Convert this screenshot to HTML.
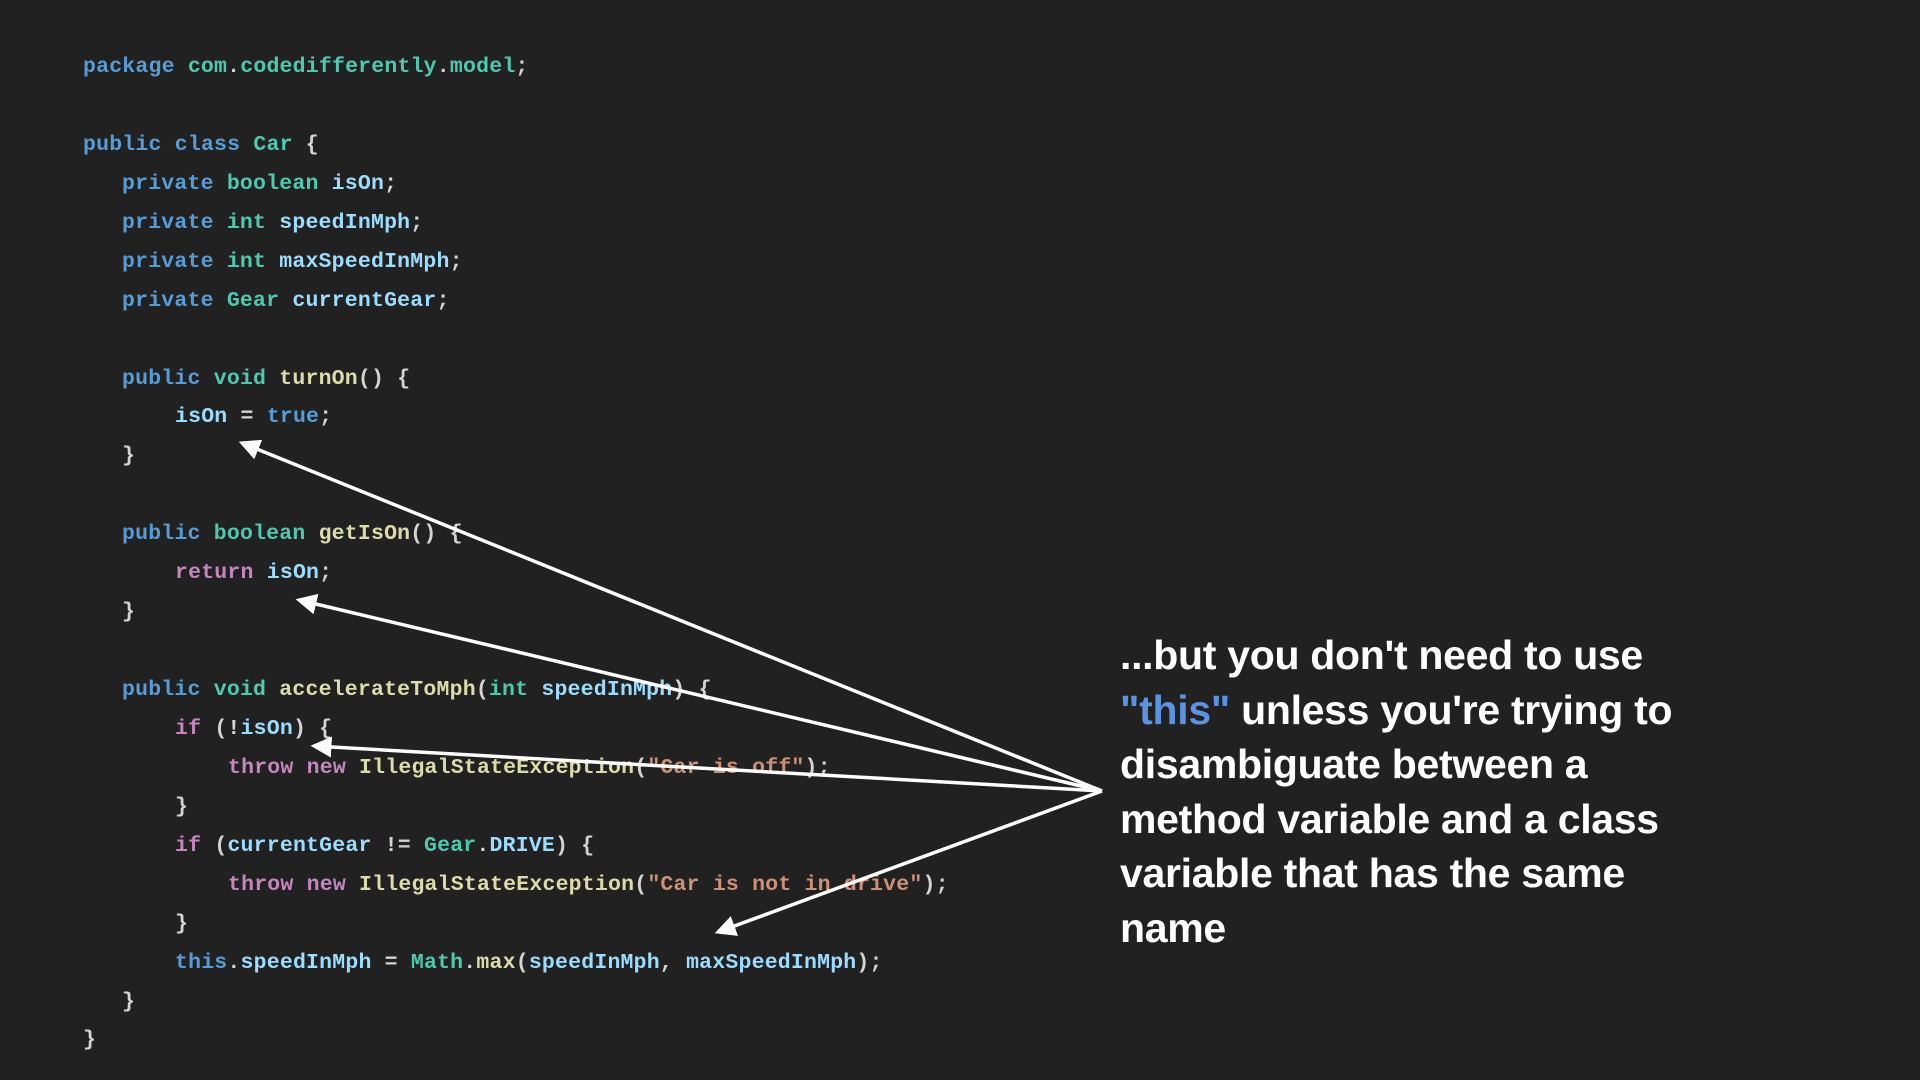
<!DOCTYPE html>
<html><head><meta charset="utf-8"><style>
html,body{margin:0;padding:0;background:#212121;width:1920px;height:1080px;overflow:hidden;position:relative}
.code{position:absolute;left:83px;top:48px;font-family:"Liberation Mono",monospace;font-weight:bold;font-size:21.5px;line-height:38.94px;color:#d4d4d4;letter-spacing:0.2px}
.code div{height:38.94px;white-space:pre}
.i1{padding-left:39px}.i2{padding-left:92px}.i3{padding-left:145px}
.k{color:#569cd6}.t{color:#4ec9b0}.v{color:#9cdcfe}.m{color:#dcdcaa}.c{color:#c586c0}.s{color:#ce9178}
.txt{position:absolute;left:1120px;top:628px;font-family:"Liberation Sans",sans-serif;font-weight:bold;font-size:41px;line-height:54.5px;color:#fff;letter-spacing:-0.3px}
.hl{color:#5b93e0}
svg{position:absolute;left:0;top:0}
</style></head><body>
<div class="code"><div><span class="k">package</span> <span class="t">com</span>.<span class="t">codedifferently</span>.<span class="t">model</span>;</div><div></div><div><span class="k">public</span> <span class="k">class</span> <span class="t">Car</span> {</div><div class="i1"><span class="k">private</span> <span class="t">boolean</span> <span class="v">isOn</span>;</div><div class="i1"><span class="k">private</span> <span class="t">int</span> <span class="v">speedInMph</span>;</div><div class="i1"><span class="k">private</span> <span class="t">int</span> <span class="v">maxSpeedInMph</span>;</div><div class="i1"><span class="k">private</span> <span class="t">Gear</span> <span class="v">currentGear</span>;</div><div></div><div class="i1"><span class="k">public</span> <span class="t">void</span> <span class="m">turnOn</span>() {</div><div class="i2"><span class="v">isOn</span> = <span class="k">true</span>;</div><div class="i1">}</div><div></div><div class="i1"><span class="k">public</span> <span class="t">boolean</span> <span class="m">getIsOn</span>() {</div><div class="i2"><span class="c">return</span> <span class="v">isOn</span>;</div><div class="i1">}</div><div></div><div class="i1"><span class="k">public</span> <span class="t">void</span> <span class="m">accelerateToMph</span>(<span class="t">int</span> <span class="v">speedInMph</span>) {</div><div class="i2"><span class="c">if</span> (!<span class="v">isOn</span>) {</div><div class="i3"><span class="c">throw</span> <span class="c">new</span> <span class="m">IllegalStateException</span>(<span class="s">"Car is off"</span>);</div><div class="i2">}</div><div class="i2"><span class="c">if</span> (<span class="v">currentGear</span> != <span class="t">Gear</span>.<span class="v">DRIVE</span>) {</div><div class="i3"><span class="c">throw</span> <span class="c">new</span> <span class="m">IllegalStateException</span>(<span class="s">"Car is not in drive"</span>);</div><div class="i2">}</div><div class="i2"><span class="k">this</span>.<span class="v">speedInMph</span> = <span class="t">Math</span>.<span class="m">max</span>(<span class="v">speedInMph</span>, <span class="v">maxSpeedInMph</span>);</div><div class="i1">}</div><div>}</div></div>
<svg width="1920" height="1080">
<defs><marker id="a" markerWidth="6" markerHeight="6" refX="5" refY="3" orient="auto" markerUnits="strokeWidth"><path d="M0,0 L6,3 L0,6 z" fill="#fff"/></marker></defs>
<g stroke="#fff" stroke-width="3.5" fill="none">
<line x1="1102" y1="791" x2="242" y2="443" marker-end="url(#a)"/>
<line x1="1102" y1="791" x2="299" y2="600" marker-end="url(#a)"/>
<line x1="1102" y1="791" x2="314" y2="746" marker-end="url(#a)"/>
<line x1="1102" y1="791" x2="718" y2="932" marker-end="url(#a)"/>
</g></svg>
<div class="txt">...but you don't need to use<br><span class="hl">"this"</span> unless you're trying to<br>disambiguate between a<br>method variable and a class<br>variable that has the same<br>name</div>
</body></html>
